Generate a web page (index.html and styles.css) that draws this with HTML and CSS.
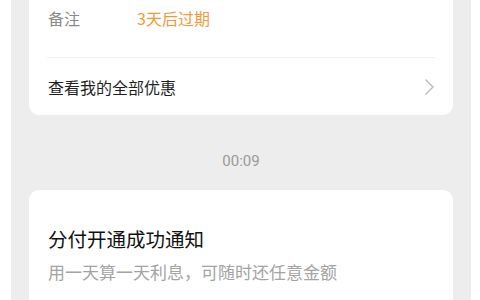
FILE: index.html
```html
<!DOCTYPE html>
<html lang="zh-CN">
<head>
    <meta charset="UTF-8">
    <meta name="viewport" content="width=device-width, initial-scale=1.0">
    <title>服务通知</title>
    <link rel="stylesheet" href="styles.css">
</head>
<body>
    <div class="screen">
        <!-- Coupon card, scrolled so only its bottom is visible -->
        <div class="card card-top">
            <div class="info-row">
                <span class="info-label">备注</span>
                <span class="info-value">3天后过期</span>
            </div>
            <div class="divider"></div>
            <div class="link-row">
                <span>查看我的全部优惠</span>
                <svg class="chevron" width="9" height="16" viewBox="0 0 9 16">
                    <path d="M1 1 L8 8 L1 15" fill="none" stroke="#b8b8b8" stroke-width="1.4" stroke-linecap="round" stroke-linejoin="round"/>
                </svg>
            </div>
        </div>

        <div class="time">00:09</div>

        <!-- Notification card -->
        <div class="card card-msg">
            <div class="msg-title">分付开通成功通知</div>
            <div class="msg-desc">用一天算一天利息，可随时还任意金额</div>
        </div>
    </div>
</body>
</html>
```

FILE: styles.css
```css
body {
    margin: 0;
    background-color: #ffffff;
    font-family: "Noto Sans CJK SC", "Noto Sans", sans-serif;
}
.screen {
    width: 460px;
    height: 300px;
    margin-left: 11px;
    background-color: #ededed;
    overflow: hidden;
}
.card {
    margin: 0 18px;
    padding: 0 18px;
    background-color: #ffffff;
}
.card-top {
    border-radius: 0 0 10px 10px;
}
.info-row {
    display: flex;
    height: 36px;
    line-height: 36px;
    font-size: 16px;
    margin-bottom: 21px;
}
.info-label {
    width: 89px;
    padding-left: 1px;
    color: #8a8a8a;
}
.info-value {
    color: #f29a38;
}
.divider {
    height: 1px;
    background-color: #f0f0f0;
}
.link-row {
    display: flex;
    justify-content: space-between;
    align-items: center;
    height: 57px;
    padding-left: 1px;
    font-size: 16px;
    color: #1f1f1f;
}
.chevron {
    margin-right: 1px;
}
.time {
    margin-top: 36px;
    margin-bottom: 19px;
    line-height: 20px;
    text-align: center;
    font-family: Roboto, "Noto Sans CJK SC", sans-serif;
    font-size: 15px;
    color: #9a9a9a;
}
.card-msg {
    border-radius: 10px 10px 0 0;
    padding-top: 35px;
    height: 200px;
}
.msg-title {
    padding-left: 1px;
    line-height: 28px;
    font-size: 19.5px;
    color: #111111;
}
.msg-desc {
    margin-top: 7px;
    padding-left: 1px;
    line-height: 24px;
    font-size: 17px;
    color: #a3a3a3;
}
```
